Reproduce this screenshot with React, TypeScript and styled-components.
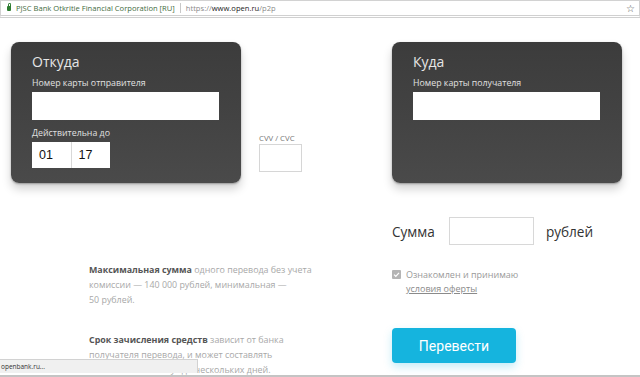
import React from "react";
import styled, { createGlobalStyle } from "styled-components";

const GlobalStyle = createGlobalStyle`
  html, body {
    margin: 0;
    padding: 0;
    background: #ffffff;
  }
  body {
    font-family: "Open Sans", "Noto Sans", sans-serif;
    color: #333;
  }
`;

const Window = styled.div`
  position: relative;
  width: 640px;
  height: 377px;
  overflow: hidden;
  box-sizing: border-box;
  border-bottom: 2px solid #c4c4c4;
`;

const AddressBar = styled.div`
  height: 18px;
  box-sizing: border-box;
  display: flex;
  align-items: center;
  padding: 0 4px 0 5px;
  border: 1px solid #d2d2d2;
  border-bottom: 3px double #d0d0d0;
  font-family: "Open Sans", sans-serif;
  font-size: 7.6px;
  white-space: nowrap;
`;

const Lock = styled.span`
  width: 4px;
  height: 5px;
  margin: 1px 5px 0 1px;
  background: #2f7d32;
  border-radius: 1px;
  position: relative;
  &::before {
    content: "";
    position: absolute;
    left: 0.5px;
    top: -3px;
    width: 1.5px;
    height: 2.5px;
    border: 0.8px solid #2f7d32;
    border-bottom: none;
    border-radius: 2px 2px 0 0;
  }
`;

const Owner = styled.span`
  color: #3f6b40;
`;

const Divider = styled.span`
  width: 1px;
  height: 10px;
  background: #c8c8c8;
  margin: 0 5px;
`;

const UrlPart = styled.span<{ $dim?: boolean }>`
  color: ${(p) => (p.$dim ? "#8a8a8a" : "#222")};
`;

const Star = styled.span`
  margin-left: auto;
  font-size: 10px;
  color: #555;
`;

const Main = styled.div`
  padding: 24px 18px 0 11px;
`;

const CardsRow = styled.div`
  display: flex;
  align-items: flex-start;
`;

const Card = styled.div`
  width: 230px;
  height: 141px;
  box-sizing: border-box;
  padding: 10px 22px 0 21px;
  border-radius: 8px;
  background: linear-gradient(180deg, #3c3c3c 0%, #444 60%, #4a4a4a 100%);
  box-shadow: 0 6px 10px rgba(0, 0, 0, 0.18), 0 1px 2px rgba(0, 0, 0, 0.3);
`;

const RightCard = styled(Card)`
  margin-left: auto;
`;

const CardTitle = styled.div`
  font-size: 14px;
  line-height: 19px;
  color: #e6e6e6;
`;

const CardLabel = styled.div<{ $gap?: number }>`
  margin-top: ${(p) => p.$gap ?? 5}px;
  font-size: 8.8px;
  line-height: 14px;
  color: #e0e0e0;
`;

const CardInput = styled.div`
  margin-top: 2px;
  width: 187px;
  height: 28px;
  background: #fff;
`;

const DateBox = styled.div`
  margin-top: 2px;
  display: flex;
  width: 78px;
  height: 26px;
  background: #fff;
`;

const DatePart = styled.div<{ $first?: boolean }>`
  flex: 1;
  display: flex;
  align-items: center;
  padding-left: 7px;
  font-family: "Liberation Sans", Arial, sans-serif;
  font-size: 12.5px;
  color: #111;
  border-right: ${(p) => (p.$first ? "1px solid #d8d8d8" : "none")};
`;

const CvvGroup = styled.div`
  margin: 91px 0 0 18px;
`;

const CvvLabel = styled.div`
  font-size: 7.8px;
  line-height: 10px;
  color: #777;
`;

const CvvBox = styled.div`
  margin-top: 1px;
  width: 43px;
  height: 28px;
  box-sizing: border-box;
  border: 1px solid #d6d6d6;
`;

const BottomRow = styled.div`
  display: flex;
  justify-content: space-between;
  margin-top: 34px;
`;

const Info = styled.div`
  margin: 45px 0 0 78px;
  width: 240px;
`;

const InfoText = styled.p<{ $gap?: number }>`
  margin: ${(p) => p.$gap ?? 0}px 0 0;
  font-size: 8.9px;
  line-height: 15px;
  color: #a8a8a8;
  white-space: nowrap;
  b {
    color: #555;
    font-weight: 700;
  }
`;

const Side = styled.div`
  width: 230px;
`;

const SumRow = styled.div`
  display: flex;
  align-items: center;
  height: 28px;
`;

const SumLabel = styled.span`
  font-size: 13.6px;
  color: #333;
`;

const SumInput = styled.div`
  width: 85px;
  height: 28px;
  box-sizing: border-box;
  border: 1px solid #d8d8d8;
  margin: 0 12px 0 14px;
`;

const Agree = styled.div`
  margin-top: 23px;
  display: flex;
  align-items: flex-start;
`;

const Check = styled.span`
  flex: none;
  width: 9px;
  height: 9px;
  margin: 2px 5px 0 0;
  border-radius: 1px;
  background: #b4b4b4;
  display: flex;
  align-items: center;
  justify-content: center;
`;

const AgreeText = styled.div`
  font-size: 9px;
  line-height: 14px;
  color: #9a9a9a;
  a {
    color: #8a8a8a;
    text-decoration: underline;
  }
`;

const SendButton = styled.button`
  margin-top: 32px;
  width: 124px;
  height: 35px;
  border: none;
  border-radius: 4px;
  background: #15b4de;
  color: #fff;
  font-family: "Roboto", "Open Sans", sans-serif;
  font-size: 14px;
  box-shadow: 0 4px 8px rgba(21, 180, 222, 0.25);
`;

const StatusBar = styled.div`
  position: absolute;
  z-index: 2;
  left: 0;
  bottom: 2px;
  width: 198px;
  height: 14px;
  box-sizing: border-box;
  padding-left: 1px;
  background: #f0f0f0;
  border-top: 1px solid #d2d2d2;
  border-right: 1px solid #d2d2d2;
  font-size: 6.5px;
  line-height: 13px;
  color: #333;
`;

const App: React.FC = () => {
  return (
    <Window>
      <GlobalStyle />
      <AddressBar>
        <Lock />
        <Owner>PJSC Bank Otkritie Financial Corporation [RU]</Owner>
        <Divider />
        <UrlPart $dim>https://</UrlPart>
        <UrlPart>www.open.ru</UrlPart>
        <UrlPart $dim>/p2p</UrlPart>
        <Star>☆</Star>
      </AddressBar>
      <Main>
        <CardsRow>
          <Card>
            <CardTitle>Откуда</CardTitle>
            <CardLabel>Номер карты отправителя</CardLabel>
            <CardInput />
            <CardLabel $gap={6}>Действительна до</CardLabel>
            <DateBox>
              <DatePart $first>01</DatePart>
              <DatePart>17</DatePart>
            </DateBox>
          </Card>
          <CvvGroup>
            <CvvLabel>CVV / CVC</CvvLabel>
            <CvvBox />
          </CvvGroup>
          <RightCard>
            <CardTitle>Куда</CardTitle>
            <CardLabel>Номер карты получателя</CardLabel>
            <CardInput />
          </RightCard>
        </CardsRow>
        <BottomRow>
          <Info>
            <InfoText>
              <b>Максимальная сумма</b> одного перевода без учета
              <br />
              комиссии — 140 000 рублей, минимальная —
              <br />
              50 рублей.
            </InfoText>
            <InfoText $gap={25}>
              <b>Срок зачисления средств</b> зависит от банка
              <br />
              получателя перевода, и может составлять
              <br />
              от нескольких минут до нескольких дней.
            </InfoText>
          </Info>
          <Side>
            <SumRow>
              <SumLabel>Сумма</SumLabel>
              <SumInput />
              <SumLabel>рублей</SumLabel>
            </SumRow>
            <Agree>
              <Check>
                <svg width="7" height="7" viewBox="0 0 7 7">
                  <path d="M1 3.6 L2.8 5.3 L6 1.8" stroke="#fff" strokeWidth="1.2" fill="none" />
                </svg>
              </Check>
              <AgreeText>
                Ознакомлен и принимаю
                <br />
                <a>условия оферты</a>
              </AgreeText>
            </Agree>
            <SendButton>Перевести</SendButton>
          </Side>
        </BottomRow>
      </Main>
      <StatusBar>openbank.ru...</StatusBar>
    </Window>
  );
};

export default App;
